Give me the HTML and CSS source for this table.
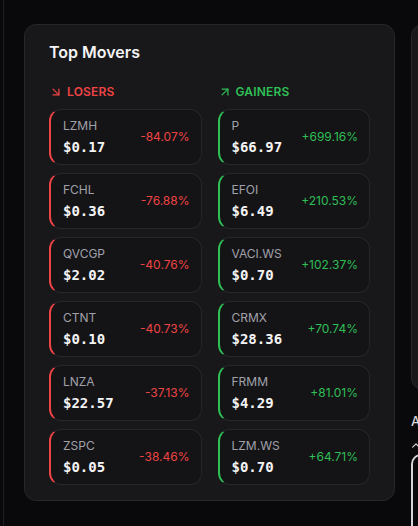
FILE: index.html
```html
<!DOCTYPE html>
<html lang="en">
<head>
<meta charset="utf-8">
<title>Top Movers</title>
<link rel="stylesheet" href="styles.css">
</head>
<body>
<div class="page">
  <div class="edge"></div>
  <section class="movers">
    <h2 class="title">Top Movers</h2>
    <div class="cols">
      <div class="col losers">
        <div class="col-head">
          <svg class="arrow" viewBox="0 0 24 24" fill="none" stroke="currentColor" stroke-width="2.2" stroke-linecap="round" stroke-linejoin="round"><path d="M7 7l10 10"/><path d="M17 7v10H7"/></svg>
          <span>Losers</span>
        </div>
        <div class="list">
          <div class="row"><div class="info"><div class="sym">LZMH</div><div class="price">$0.17</div></div><div class="pct">-84.07%</div></div>
          <div class="row"><div class="info"><div class="sym">FCHL</div><div class="price">$0.36</div></div><div class="pct">-76.88%</div></div>
          <div class="row"><div class="info"><div class="sym">QVCGP</div><div class="price">$2.02</div></div><div class="pct">-40.76%</div></div>
          <div class="row"><div class="info"><div class="sym">CTNT</div><div class="price">$0.10</div></div><div class="pct">-40.73%</div></div>
          <div class="row"><div class="info"><div class="sym">LNZA</div><div class="price">$22.57</div></div><div class="pct">-37.13%</div></div>
          <div class="row"><div class="info"><div class="sym">ZSPC</div><div class="price">$0.05</div></div><div class="pct">-38.46%</div></div>
        </div>
      </div>
      <div class="col gainers">
        <div class="col-head">
          <svg class="arrow" viewBox="0 0 24 24" fill="none" stroke="currentColor" stroke-width="2.2" stroke-linecap="round" stroke-linejoin="round"><path d="M7 17L17 7"/><path d="M7 7h10v10"/></svg>
          <span>Gainers</span>
        </div>
        <div class="list">
          <div class="row"><div class="info"><div class="sym">P</div><div class="price">$66.97</div></div><div class="pct">+699.16%</div></div>
          <div class="row"><div class="info"><div class="sym">EFOI</div><div class="price">$6.49</div></div><div class="pct">+210.53%</div></div>
          <div class="row"><div class="info"><div class="sym">VACI.WS</div><div class="price">$0.70</div></div><div class="pct">+102.37%</div></div>
          <div class="row"><div class="info"><div class="sym">CRMX</div><div class="price">$28.36</div></div><div class="pct">+70.74%</div></div>
          <div class="row"><div class="info"><div class="sym">FRMM</div><div class="price">$4.29</div></div><div class="pct">+81.01%</div></div>
          <div class="row"><div class="info"><div class="sym">LZM.WS</div><div class="price">$0.70</div></div><div class="pct">+64.71%</div></div>
        </div>
      </div>
    </div>
  </section>
  <aside class="side">
    <div class="side-card"></div>
    <div class="side-label">A</div>
    <svg class="side-chev" viewBox="0 0 12 8" fill="none" stroke="currentColor" stroke-width="1.4" stroke-linecap="round" stroke-linejoin="round"><path d="M2 6l4-4 4 4"/></svg>
    <div class="side-box"></div>
  </aside>
</div>
</body>
</html>
```
FILE: styles.css
```css
html, body {
  margin: 0;
  padding: 0;
  background: #09090b;
  overflow: hidden;
}
body {
  font-family: Inter, "Noto Sans", sans-serif;
  color: #fafafa;
}
.page {
  display: flex;
  align-items: flex-start;
  width: 418px;
  height: 526px;
  overflow: hidden;
}
.edge {
  flex: none;
  width: 3px;
  height: 526px;
  border-right: 1px solid #1f1f23;
}
.movers {
  flex: none;
  box-sizing: border-box;
  width: 371px;
  margin: 24px 0 0 20px;
  padding: 15px 24px 15px;
  background: #18181b;
  border: 1px solid #27272a;
  border-radius: 12px;
}
.title {
  margin: 0 0 20px;
  font-size: 16px;
  line-height: 24px;
  font-weight: 600;
  color: #f4f4f5;
}
.cols {
  display: grid;
  grid-template-columns: 1fr 1fr;
  gap: 16px;
}
.col-head {
  display: flex;
  align-items: center;
  gap: 4px;
  height: 16px;
  font-size: 12px;
  line-height: 16px;
  font-weight: 600;
  text-transform: uppercase;
  letter-spacing: 0.2px;
}
.losers .col-head { color: #ef4444; }
.gainers .col-head { color: #2fbf55; }
.arrow {
  width: 14px;
  height: 14px;
  flex: none;
}
.list {
  display: flex;
  flex-direction: column;
  gap: 8px;
  margin-top: 9px;
}
.row {
  box-sizing: border-box;
  height: 56px;
  display: flex;
  align-items: center;
  justify-content: space-between;
  padding: 0 11px 0 12px;
  background: #141417;
  border: 1px solid #27272a;
  border-radius: 12px;
}
.losers .row { border-left: 2px solid #ef4444; }
.gainers .row { border-left: 2px solid #2fbf55; }
.info {
  display: flex;
  flex-direction: column;
  gap: 3px;
}
.sym {
  font-size: 12px;
  line-height: 16px;
  color: #a1a1aa;
}
.price {
  font-family: "DejaVu Sans Mono", "Liberation Mono", monospace;
  font-weight: 700;
  font-size: 14px;
  line-height: 20px;
  color: #f4f4f5;
}
.pct {
  font-size: 12px;
  line-height: 16px;
}
.losers .pct { color: #ef4444; }
.gainers .pct { color: #2fbf55; }
.side {
  flex: none;
  display: flex;
  flex-direction: column;
  width: 200px;
  margin: 24px 0 0 16px;
}
.side-card {
  height: 364px;
  background: #18181b;
  border: 1px solid #27272a;
  border-radius: 12px;
}
.side-label {
  margin-top: 22px;
  font-size: 13px;
  line-height: 18px;
  font-weight: 500;
  color: #d4d4d8;
}
.side-chev {
  width: 10px;
  height: 7px;
  margin: 12px 0 0 0;
  color: #d4d4d8;
}
.side-box {
  height: 120px;
  margin-top: 5px;
  border: 2px solid #d4d4d8;
  border-radius: 10px;
}
```
